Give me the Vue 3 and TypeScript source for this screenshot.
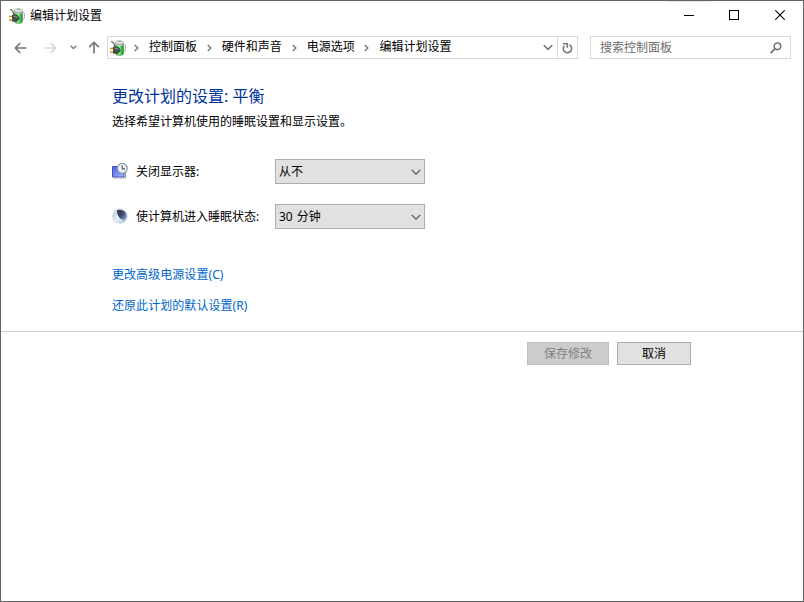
<script setup lang="ts">
import { ref } from 'vue'
import type { Ref } from 'vue'

interface Setting {
  id: 'display' | 'sleep'
  label: string
  value: string
}

const title = '编辑计划设置'
const crumbs: string[] = ['控制面板', '硬件和声音', '电源选项', '编辑计划设置']
const settings: Ref<Setting[]> = ref([
  { id: 'display', label: '关闭显示器:', value: '从不' },
  { id: 'sleep', label: '使计算机进入睡眠状态:', value: '30 分钟' },
])
const links: string[] = ['更改高级电源设置(C)', '还原此计划的默认设置(R)']
</script>

<template>
  <div class="window">
    <svg class="defs" width="0" height="0">
      <defs>
        <linearGradient id="bodyGreen" x1="0" x2="1">
          <stop offset="0" stop-color="#2a9a35" />
          <stop offset="0.45" stop-color="#8dfa8c" />
          <stop offset="0.7" stop-color="#35cf45" />
          <stop offset="1" stop-color="#16852a" />
        </linearGradient>
        <linearGradient id="screenBlue" x1="0" y1="0" x2="1" y2="1">
          <stop offset="0" stop-color="#4a5fe0" />
          <stop offset="1" stop-color="#a9b8ff" />
        </linearGradient>
        <linearGradient id="moonLight" x1="0" y1="0.3" x2="1" y2="0.8">
          <stop offset="0" stop-color="#c3cfdc" />
          <stop offset="0.4" stop-color="#e9f1fa" />
          <stop offset="1" stop-color="#a3b8e4" />
        </linearGradient>
        <linearGradient id="moonDark" x1="0" y1="0" x2="1" y2="1">
          <stop offset="0" stop-color="#36383f" />
          <stop offset="0.5" stop-color="#3f4a69" />
          <stop offset="1" stop-color="#8fa8e4" />
        </linearGradient>
        <symbol id="power" viewBox="0 0 16 16">
          <path d="M13.500 4.500c2-.4 2.100 1.500 1.900 4-.2 2-.8 3-1.900 3.500" fill="none" stroke="#9da39f" stroke-width="1" />
          <path d="M5.500 3v10.500c0 2.500 8 2.500 8 0V3z" fill="url(#bodyGreen)" stroke="#6b8371" stroke-width=".7" />
          <path d="M5.500 2.800v2c0 1.500 8 1.500 8 0v-2z" fill="#c3cdc7" />
          <ellipse cx="9.500" cy="2.600" rx="4" ry="1.700" fill="#eef2f0" stroke="#7d8982" stroke-width=".7" />
          <ellipse cx="9.500" cy="1.500" rx="1.900" ry=".9" fill="#a7b2ac" />
          <path d="M1 1.500c3 .1 3 2.500 4 5.500" fill="none" stroke="#555b55" stroke-width="1.200" />
          <path d="M0 8.500h4M0 12h4" stroke="#c69a13" stroke-width="1.500" />
          <path d="M3.500 7h2.800c2.800.2 3.700 1.800 3.700 3.200s-1.100 3.100-3.700 3.100H3.500z" fill="#4a504c" stroke="#303532" stroke-width=".7" />
          <path d="M4.800 8.300h2.200c1 .3 1.300.8 1.400 1.400" fill="none" stroke="#9aa29d" stroke-width="1" />
        </symbol>
      </defs>
    </svg>

    <div class="tab-hint"></div>
    <header class="titlebar">
      <svg class="icon16"><use href="#power" /></svg>
      <span class="title">{{ title }}</span>
      <div class="controls">
        <button class="control min" aria-label="最小化">
          <svg width="10" height="11" shape-rendering="crispEdges"><path d="M0 5.500h10" stroke="#000" /></svg>
        </button>
        <button class="control" aria-label="最大化">
          <svg width="11" height="11" shape-rendering="crispEdges"><path d="M.5.5h9v9h-9z" fill="none" stroke="#000" /></svg>
        </button>
        <button class="control close" aria-label="关闭">
          <svg width="10" height="10"><path d="M.3.3l9.400 9.400M9.700.3L.3 9.700" stroke="#000" stroke-width="1.100" /></svg>
        </button>
      </div>
    </header>

    <nav class="navbar">
      <svg class="back" width="13" height="12"><path d="M12.500 6H1.500M6.200 1.200L1.400 6l4.800 4.800" fill="none" stroke="#777" stroke-width="1.700" /></svg>
      <svg class="forward" width="13" height="12"><path d="M.5 6h11M6.800 1.200L11.600 6l-4.800 4.800" fill="none" stroke="#d6d6d6" stroke-width="1.700" /></svg>
      <svg class="recent" width="7" height="5"><path d="M.6.8l2.900 2.800L6.400.8" fill="none" stroke="#808080" stroke-width="1.400" /></svg>
      <svg class="up" width="12" height="13"><path d="M6 12.500V1.500M1.200 6.200L6 1.400l4.800 4.800" fill="none" stroke="#777" stroke-width="1.700" /></svg>

      <div class="address">
        <svg class="icon16"><use href="#power" /></svg>
        <div class="crumbs">
          <template v-for="crumb in crumbs" :key="crumb">
            <svg class="sep" width="5" height="8"><path d="M.8 1l3 3-3 3" fill="none" stroke="#777" stroke-width="1.400" /></svg>
            <span class="crumb">{{ crumb }}</span>
          </template>
        </div>
        <svg class="drop" width="10" height="7"><path d="M.8 1.200L5 5.300l4.200-4.100" fill="none" stroke="#777" stroke-width="1.600" /></svg>
        <div class="refresh">
          <svg width="11" height="12"><path d="M7.400 2.800A4.200 4.200 0 1 1 2.300 3.800" fill="none" stroke="#777" stroke-width="1.600" /><path d="M1 1.800h4.300v4" fill="none" stroke="#777" stroke-width="1.600" /></svg>
        </div>
      </div>

      <div class="search">
        <span>搜索控制面板</span>
        <svg width="12" height="12"><circle cx="7.400" cy="4.300" r="3.300" fill="none" stroke="#777" stroke-width="1.600" /><path d="M5 6.700L.7 11" stroke="#777" stroke-width="1.900" /></svg>
      </div>
    </nav>

    <main class="content">
      <h1>更改计划的设置: 平衡</h1>
      <p>选择希望计算机使用的睡眠设置和显示设置。</p>

      <div class="settings">
        <div v-for="item in settings" :key="item.id" class="setting">
          <svg v-if="item.id === 'display'" class="icon16" viewBox="0 0 16 16">
            <path d="M.5 3.500h11.500v10.500H.5z" fill="url(#screenBlue)" stroke="#3f51bf" />
            <path d="M1 15h12.500" stroke="#a4abb8" />
            <path d="M13.500 9v6" stroke="#8f98ae" />
            <circle cx="10.300" cy="5.400" r="4.900" fill="#edf2f5" stroke="#8b97a2" stroke-width="1.200" />
            <path d="M10.300 2.300v3.600h2.700" fill="none" stroke="#4d5d6f" stroke-width="1.100" />
          </svg>
          <svg v-else class="icon16" viewBox="0 0 16 16">
            <circle cx="8" cy="8" r="7.300" fill="url(#moonLight)" stroke="#c9d3df" stroke-width=".8" />
            <path d="M5 2.300C8 .9 12.600 2 14 5.800c.8 3.200 0 5.400-1.600 6.200C8.600 11.800 4.800 8.300 5 2.300z" fill="url(#moonDark)" />
          </svg>
          <span class="label">{{ item.label }}</span>
          <button class="select">
            <span>{{ item.value }}</span>
            <svg width="10" height="6"><path d="M.7.8L5 5.100 9.300.8" fill="none" stroke="#505050" stroke-width="1.100" /></svg>
          </button>
        </div>
      </div>

      <div class="links">
        <a v-for="link in links" :key="link">{{ link }}</a>
      </div>
    </main>

    <footer class="footer">
      <button class="btn save" disabled>保存修改</button>
      <button class="btn cancel">取消</button>
    </footer>
  </div>
</template>

<style>
body {
  background: #fff;
}
</style>

<style scoped>
.window {
  position: relative;
  box-sizing: border-box;
  width: 804px;
  height: 602px;
  border: 1px solid #646464;
  background: #fff;
  color: #000;
  font: 12px/16px "Noto Sans", "Noto Sans CJK SC", sans-serif;
  overflow: hidden;
}
svg {
  display: block;
  flex: none;
}
.defs {
  position: absolute;
}
.tab-hint {
  position: absolute;
  top: 0;
  left: 665px;
  width: 45px;
  height: 1px;
  background: #e8e8e8;
}
button {
  font: inherit;
  color: inherit;
  padding: 0;
  margin: 0;
  border: 0;
  background: none;
}
.icon16 {
  width: 16px;
  height: 16px;
}
.titlebar {
  display: flex;
  align-items: center;
  height: 29px;
  padding-left: 8px;
}
.title {
  margin-left: 5px;
}
.controls {
  display: flex;
  margin-left: auto;
  height: 29px;
}
.control {
  display: flex;
  align-items: center;
  justify-content: center;
  box-sizing: border-box;
  width: 46px;
}
.min {
  padding-left: 2px;
}
.close {
  padding-bottom: 1px;
}
.navbar {
  display: flex;
  align-items: center;
  height: 23px;
  margin-top: 6px;
  padding-left: 13px;
}
.forward {
  margin-left: 17px;
}
.recent {
  margin-left: 13px;
}
.up {
  margin-left: 11px;
}
.address {
  display: flex;
  align-items: center;
  box-sizing: border-box;
  width: 471px;
  height: 23px;
  margin-left: 7px;
  padding-left: 2px;
  border: 1px solid #d9d9d9;
}
.crumbs {
  display: flex;
  align-items: center;
  flex: 1;
  margin-left: 8px;
}
.sep {
  margin-right: 10px;
}
.crumb {
  margin-right: 9.8px;
  padding-bottom: 2px;
}
.drop {
  margin-right: 4px;
}
.refresh {
  display: flex;
  align-items: center;
  justify-content: center;
  width: 19px;
  height: 21px;
  border-left: 1px solid #d9d9d9;
}
.search {
  display: flex;
  align-items: center;
  justify-content: space-between;
  box-sizing: border-box;
  width: 201px;
  height: 23px;
  margin-left: 12px;
  padding: 0 8px 0 9px;
  border: 1px solid #d9d9d9;
  color: #6d6d6d;
}
.content {
  box-sizing: border-box;
  height: 272px;
  padding: 25px 0 0 111px;
}
h1 {
  margin: 0;
  color: #003399;
  font-size: 16px;
  font-weight: 400;
  line-height: 24px;
}
p {
  margin: 6px 0 0;
}
.settings {
  display: grid;
  gap: 20px;
  margin-top: 29px;
}
.setting {
  display: flex;
  align-items: center;
  height: 25px;
}
.label {
  width: 139px;
  margin-left: 8px;
  white-space: nowrap;
}
.select {
  display: flex;
  align-items: center;
  justify-content: space-between;
  box-sizing: border-box;
  width: 150px;
  height: 25px;
  padding: 0 3px;
  border: 1px solid #adadad;
  background: #e1e1e1;
  word-spacing: 1px;
}
.setting .icon16 {
  margin-bottom: 1px;
}
.links {
  display: flex;
  flex-direction: column;
  align-items: flex-start;
  gap: 15px;
  margin-top: 38px;
  color: #0066cc;
  letter-spacing: 0.06px;
}
.footer {
  display: flex;
  justify-content: flex-end;
  gap: 8px;
  padding: 10px 112px 0 0;
  border-top: 1px solid #cccccc;
}
.btn {
  box-sizing: border-box;
  height: 23px;
  border: 1px solid #adadad;
  background: #e1e1e1;
}
.save {
  width: 82px;
  border-color: #bfbfbf;
  background: #cccccc;
  color: #838383;
}
.cancel {
  width: 74px;
}
</style>
